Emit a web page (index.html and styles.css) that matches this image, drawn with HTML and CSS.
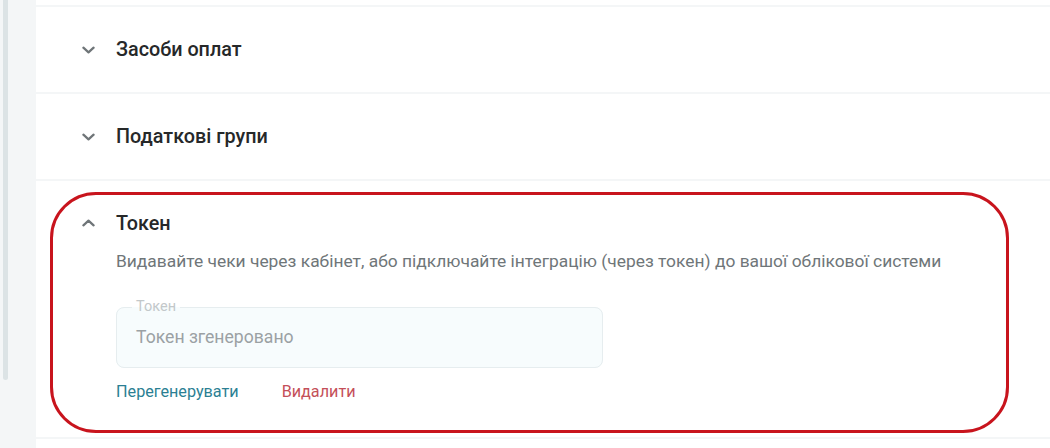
FILE: index.html
```html
<!DOCTYPE html>
<html lang="uk">
<head>
  <meta charset="UTF-8">
  <meta name="viewport" content="width=device-width, initial-scale=1.0">
  <link rel="stylesheet" href="styles.css">
  <title>Налаштування каси</title>
</head>
<body>
  <div class="layout">
    <div class="rail">
      <div class="rail-thumb"></div>
    </div>
    <div class="panels">
      <div class="panel panel-stub"></div>

      <div class="panel">
        <div class="panel-header">
          <svg class="chevron" viewBox="0 0 14 8"><path d="M1.5 1.5 L7 6.5 L12.5 1.5" /></svg>
          <h3 class="panel-title">Засоби оплат</h3>
        </div>
      </div>

      <div class="panel">
        <div class="panel-header">
          <svg class="chevron" viewBox="0 0 14 8"><path d="M1.5 1.5 L7 6.5 L12.5 1.5" /></svg>
          <h3 class="panel-title">Податкові групи</h3>
        </div>
      </div>

      <div class="panel panel-open">
        <div class="panel-header">
          <svg class="chevron" viewBox="0 0 14 8"><path d="M1.5 6.5 L7 1.5 L12.5 6.5" /></svg>
          <h3 class="panel-title">Токен</h3>
        </div>
        <div class="panel-body">
          <p class="panel-text">Видавайте чеки через кабінет, або підключайте інтеграцію (через токен) до вашої облікової системи</p>
          <fieldset class="field">
            <legend class="field-label">Токен</legend>
            <div class="field-value">Токен згенеровано</div>
          </fieldset>
          <div class="actions">
            <a class="action action-primary" href="#">Перегенерувати</a>
            <a class="action action-danger" href="#">Видалити</a>
          </div>
        </div>
        <div class="highlight"></div>
      </div>

      <div class="panel panel-stub"></div>
    </div>
  </div>
</body>
</html>
```

FILE: styles.css
```css
:root {
  --bg-color: #f4f6f7;
  --panel-color: #ffffff;
  --text-color: #262829;
  --muted-color: #6f7679;
}

body {
  background-color: var(--bg-color);
  font-family: Roboto, "Noto Sans", sans-serif;
  height: 100vh;
  margin: 0px;
  overflow: hidden;
}

.layout {
  display: flex;
  height: 100%;
}

.rail {
  padding-left: 3px;
  width: 33px;
  flex-shrink: 0;
}

.rail-thumb {
  background-color: #dce3e5;
  border-radius: 0 0 3px 3px;
  height: 380px;
  width: 5px;
}

.panels {
  display: flex;
  flex-direction: column;
  gap: 2px;
  flex: 1;
}

.panel {
  background-color: var(--panel-color);
  position: relative;
}

.panel-stub {
  height: 5px;
  flex-shrink: 0;
}

.panel-stub:last-child {
  flex: 1;
}

.panel-header {
  align-items: center;
  display: flex;
  height: 85px;
  padding-left: 46px;
}

.chevron {
  fill: none;
  height: 8px;
  stroke: #6f7578;
  stroke-linecap: round;
  stroke-linejoin: round;
  stroke-width: 2.4;
  width: 13px;
}

.panel-title {
  color: var(--text-color);
  font-size: 19.8px;
  font-weight: 500;
  margin: 0 0 0 21px;
}

.panel-open .panel-header {
  height: 24px;
  padding-top: 30px;
}

.panel-body {
  padding: 14px 0 35px 80px;
}

.panel-text {
  color: var(--muted-color);
  font-size: 17.4px;
  line-height: 24px;
  margin: 0 0 27px;
}

.field {
  background-color: #f7fcfd;
  border: 1px solid #e6edef;
  border-radius: 8px;
  box-sizing: border-box;
  height: 68px;
  margin: 0;
  padding: 0 19px;
  width: 487px;
}

.field-label {
  color: #c3c8ca;
  font-size: 14.5px;
  line-height: 14px;
  padding: 0 4px;
  margin-left: -4px;
}

.field-value {
  color: #9ba1a4;
  font-size: 17.6px;
  line-height: 24px;
  padding-top: 11px;
}

.actions {
  display: flex;
  gap: 43px;
  margin-top: 14px;
}

.action {
  font-size: 16.2px;
  line-height: 20px;
  text-decoration: none;
}

.action-primary {
  color: #2b7f93;
}

.action-danger {
  color: #c44f59;
}

.highlight {
  border: 3px solid #c8141d;
  border-radius: 46px;
  box-sizing: border-box;
  height: 241px;
  left: 14px;
  pointer-events: none;
  position: absolute;
  top: 11px;
  width: 959px;
}
```
